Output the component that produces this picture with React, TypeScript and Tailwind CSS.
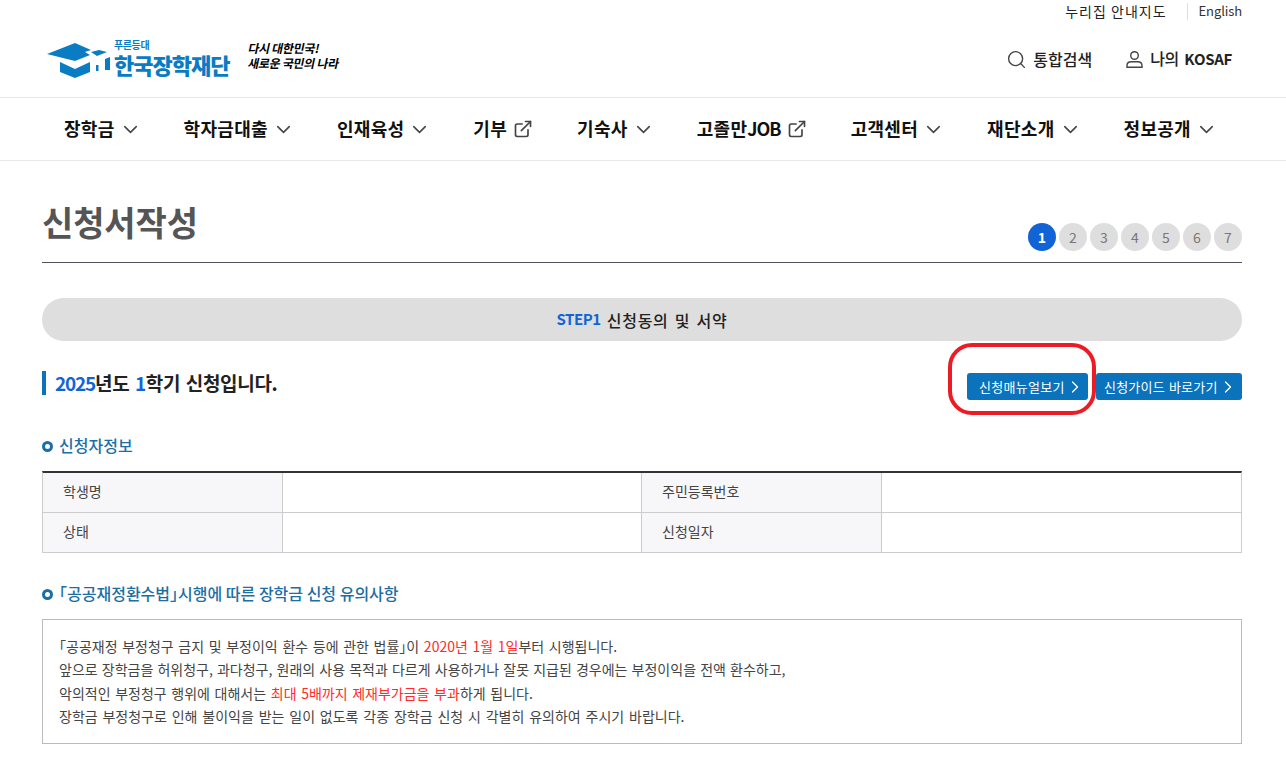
import { ChevronDown, ChevronRight, ExternalLink, Search } from 'lucide-react';

const font = { fontFamily: '"Noto Sans CJK KR", "Noto Sans", sans-serif' };

const menus = [
  { label: '장학금', icon: 'down' },
  { label: '학자금대출', icon: 'down' },
  { label: '인재육성', icon: 'down' },
  { label: '기부', icon: 'link' },
  { label: '기숙사', icon: 'down' },
  { label: '고졸만', suffix: 'JOB', icon: 'link' },
  { label: '고객센터', icon: 'down' },
  { label: '재단소개', icon: 'down' },
  { label: '정보공개', icon: 'down' },
];

const Logo = () => (
  <div className="flex items-end">
    <svg width="66" height="36" viewBox="0 0 66 36">
      <path d="M0 12 L28 1 L44 8 L38 10 L43 13 L28 19 Z" fill="#0a7cc4" />
      <path d="M44 10 L52 8 L60 10 L50 14 Z" fill="#0a7cc4" />
      <path d="M13 20 L28 27 L43 20 V30 L28 36 L13 30 Z" fill="#0a7cc4" />
      <path d="M49 23 h2.5 v6 h-2.5z M58 17 l5 -2 v13 h-5z" fill="#0a7cc4" />
    </svg>
    <div className="ml-[1px] flex flex-col">
      <span className="text-[10px] leading-[12px] font-bold text-[#0a7cc4] tracking-[-0.4px]">푸른등대</span>
      <span className="text-[22px] leading-[27px] font-black text-[#0a7cc4] tracking-[-1px]">한국장학재단</span>
    </div>
  </div>
);

const Slogan = () => (
  <div className="ml-[18px] mb-[8px] flex -skew-x-12 flex-col text-[12px] leading-[15px] font-bold text-black tracking-[-0.3px]">
    <span>다시 대한민국!</span>
    <span className="ml-[3px]">새로운 국민의 나라</span>
  </div>
);

const SectionTitle = ({ children }: { children: React.ReactNode }) => (
  <h3 className="flex h-[22px] items-center gap-[6px] text-[16px] leading-[20px] font-medium text-[#1c6ea4]">
    <span className="h-[11px] w-[11px] shrink-0 rounded-full border-[3px] border-[#1c6ea4]" />
    <span className="pb-[2px]">{children}</span>
  </h3>
);

const InfoRow = ({ a, b, last }: { a: string; b: string; last?: boolean }) => (
  <div className={`grid grid-cols-[240px_359px_240px_1fr] ${last ? 'h-[39px]' : 'h-[40px] border-b border-[#ccc]'}`}>
    <div className="flex items-center bg-[#f7f7f9] pb-[2px] pl-[20px] text-[14px] text-[#444] border-r border-[#ccc]">{a}</div>
    <div className="border-r border-[#ccc]" />
    <div className="flex items-center bg-[#f7f7f9] pb-[2px] pl-[20px] text-[14px] text-[#444] border-r border-[#ccc]">{b}</div>
    <div />
  </div>
);

export default function App() {
  return (
    <div style={font} className="min-h-[768px] bg-white text-[#222]">
      <div className="ml-[42px] w-[1200px]">
        <div className="flex h-[22px] items-center justify-end text-[14px] text-[#222]">
          <span className="tracking-[1px]">누리집 안내지도</span>
          <span className="ml-[20px] mr-[11px] h-[17px] w-px bg-[#ddd]" />
          <span className="text-[13px] text-[#333] tracking-[-0.1px]">English</span>
        </div>
        <div className="flex h-[75px] items-center justify-between">
          <div className="flex items-end pb-[3px] pl-[5px]">
            <Logo />
            <Slogan />
          </div>
          <div className="flex items-center pr-[10px] text-[16px] font-medium text-[#222]">
            <Search size={21} strokeWidth={1.6} className="mr-[6px] text-[#444]" />
            <span className="pb-[2px]">통합검색</span>
            <svg width="19" height="19" viewBox="0 0 19 19" fill="none" stroke="#444" strokeWidth="1.4" className="ml-[33px] mr-[6px]">
              <circle cx="9.5" cy="5.5" r="3.8" />
              <path d="M2 17.3 V15.5 C2 13 4 11.8 6.5 11.8 H12.5 C15 11.8 17 13 17 15.5 V17.3 Z" />
            </svg>
            <span className="pb-[2px] tracking-[-0.3px] [word-spacing:2px]">나의 <b className="text-[15px] font-bold">KOSAF</b></span>
          </div>
        </div>
      </div>

      <nav className="flex h-[64px] items-center gap-[42px] border-y border-[#e8e8e8] pl-[64px]">
        {menus.map((m) => (
          <div key={m.label} className="flex items-center text-[18px] font-bold text-[#111] tracking-[0.3px]">
            <span className="pb-[2px]">
              {m.label}
              {m.suffix && <span className="tracking-[-1px]">{m.suffix}</span>}
            </span>
            {m.icon === 'down' ? (
              <ChevronDown size={23} strokeWidth={1.6} className="ml-[4px] text-[#444]" />
            ) : (
              <ExternalLink size={20} strokeWidth={2} className="ml-[6px] mr-[2px] text-[#444]" />
            )}
          </div>
        ))}
      </nav>

      <main className="ml-[42px] w-[1200px]">
        <div className="flex h-[102px] items-end justify-between border-b border-[#555060] pb-[11px]">
          <h2 className="mb-[7px] text-[34px] leading-[44px] font-bold text-[#555] tracking-[-0.1px]">신청서작성</h2>
          <div className="flex gap-[3px]">
            {[1, 2, 3, 4, 5, 6, 7].map((n) => (
              <span
                key={n}
                className={`flex h-[28px] w-[28px] items-center justify-center rounded-full text-[14px] ${
                  n === 1 ? 'bg-[#1264d6] font-bold text-white' : 'bg-[#dedede] text-[#777]'
                }`}
              >
                {n}
              </span>
            ))}
          </div>
        </div>

        <div className="mt-[35px] flex h-[43px] items-center justify-center rounded-full bg-[#dedede] text-[16px] font-medium text-[#222] tracking-[0.7px] [word-spacing:2px]">
          <span className="text-[15px] font-bold text-[#1264d6] tracking-[-0.5px]">STEP1</span>&nbsp;신청동의 및 서약
        </div>

        <div className="relative mt-[27px] flex h-[30px] items-center justify-between">
          <h3 className="border-l-[4px] border-[#0a73bb] pl-[9px] text-[19px] leading-[24px] font-bold text-[#222] tracking-[-0.3px] [word-spacing:1.5px]">
            <span className="text-[#1264d6] tracking-[-1.2px]">2025</span>년도 <span className="text-[#1264d6]">1</span>학기 신청입니다.
          </h3>
          <div className="mt-[7px] flex gap-[8px]">
            <span className="flex h-[27px] w-[121px] items-center rounded-[3px] bg-[#0a73bb] pl-[12px] text-[13px] text-white tracking-[0.3px]">
              신청매뉴얼보기
              <ChevronRight size={20} strokeWidth={1.5} />
            </span>
            <span className="flex h-[27px] w-[146px] items-center rounded-[3px] bg-[#0a73bb] pl-[8px] text-[13px] text-white tracking-[0.2px] [word-spacing:1px]">
              신청가이드 바로가기
              <ChevronRight size={20} strokeWidth={1.5} />
            </span>
          </div>
          {/* 빨간 표시 */}
          <span className="absolute left-[906px] top-[-25px] h-[72px] w-[148px] rounded-[24px] border-[4px] border-[#ed1c24]" />
        </div>

        <div className="mt-[37px]">
          <SectionTitle>신청자정보</SectionTitle>
        </div>
        <div className="mt-[14px] border-t-2 border-[#333] border-x border-b border-x-[#ccc] border-b-[#ccc]">
          <InfoRow a="학생명" b="주민등록번호" />
          <InfoRow a="상태" b="신청일자" last />
        </div>

        <div className="mt-[30px]">
          <SectionTitle>
            <span className="-ml-[8px]">「</span>공공재정환수법<span className="tracking-[-8px]">」</span>시행에 따른 장학금 신청 유의사항
          </SectionTitle>
        </div>
        <div className="mt-[14px] h-[125px] border border-[#bbb] px-[16px] py-[15px] text-[14px] leading-[23.4px] text-[#444] [word-spacing:1.5px]">
          <p><span className="-ml-[7px]">「</span>공공재정 부정청구 금지 및 부정이익 환수 등에 관한 법률<span className="tracking-[-7px]">」</span>이 <span className="text-[#ff2a2a]">2020년 1월 1일</span>부터 시행됩니다.</p>
          <p className="[word-spacing:1px]">앞으로 장학금을 허위청구, 과다청구, 원래의 사용 목적과 다르게 사용하거나 잘못 지급된 경우에는 부정이익을 전액 환수하고,</p>
          <p>악의적인 부정청구 행위에 대해서는 <span className="text-[#ff2a2a]">최대 5배까지 제재부가금을 부과</span>하게 됩니다.</p>
          <p className="[word-spacing:1.7px]">장학금 부정청구로 인해 불이익을 받는 일이 없도록 각종 장학금 신청 시 각별히 유의하여 주시기 바랍니다.</p>
        </div>
      </main>
    </div>
  );
}
